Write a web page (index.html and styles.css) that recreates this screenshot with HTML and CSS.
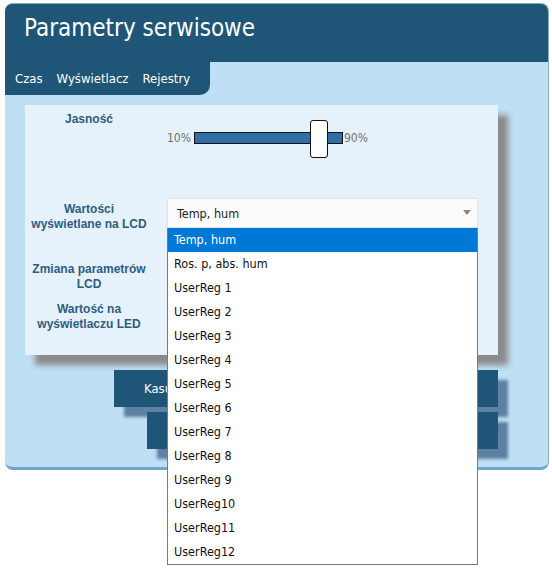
FILE: index.html
```html
<!DOCTYPE html>
<html lang="pl">
<head>
    <meta charset="UTF-8">
    <title>Parametry serwisowe</title>
    <link rel="stylesheet" href="styles.css">
</head>
<body>
    <div class="panel">
        <div class="header">
            <h1>Parametry serwisowe</h1>
        </div>

        <!-- Tabs -->
        <div class="tabbar">
            <div class="tabs">
                <span class="tab">Czas</span>
                <span class="tab">Wyświetlacz</span>
                <span class="tab">Rejestry</span>
            </div>
        </div>

        <div class="content">
            <div class="card">
                <div class="row row-brightness">
                    <div class="label">Jasność</div>
                    <div class="slider">
                        <span class="pct">10%</span>
                        <div class="track">
                            <div class="thumb"></div>
                        </div>
                        <span class="pct">90%</span>
                    </div>
                </div>

                <div class="row row-lcd">
                    <div class="label">Wartości<br>wyświetlane na LCD</div>
                    <div class="select-wrap">
                        <div class="select">
                            <span>Temp, hum</span>
                            <span class="arrow"></span>
                        </div>
                        <!-- Open dropdown list -->
                        <ul class="options">
                            <li class="selected">Temp, hum</li>
                            <li>Ros. p, abs. hum</li>
                            <li>UserReg 1</li>
                            <li>UserReg 2</li>
                            <li>UserReg 3</li>
                            <li>UserReg 4</li>
                            <li>UserReg 5</li>
                            <li>UserReg 6</li>
                            <li>UserReg 7</li>
                            <li>UserReg 8</li>
                            <li>UserReg 9</li>
                            <li>UserReg10</li>
                            <li>UserReg11</li>
                            <li>UserReg12</li>
                        </ul>
                    </div>
                </div>

                <div class="row row-small">
                    <div class="label">Zmiana parametrów<br>LCD</div>
                </div>

                <div class="row row-small">
                    <div class="label">Wartość na<br>wyświetlaczu LED</div>
                </div>
            </div>

            <div class="buttons">
                <button class="btn btn-wide">Kasuj ustawienia</button>
                <button class="btn btn-narrow">Zapisz</button>
            </div>
        </div>
    </div>
</body>
</html>
```

FILE: styles.css
```css
/* Base */
html, body {
    min-height: 569px;
}

body {
    margin: 0;
    background-color: #ffffff;
    font-family: 'DejaVu Sans Condensed', 'DejaVu Sans', sans-serif;
}

.panel {
    margin: 3px 0 0 5px;
    width: 544px;
    height: 467px;
    box-sizing: border-box;
    background-color: #bfdff4;
    border-top: 1px solid #8ea9c2;
    border-right: 1px solid #8ea9c2;
    border-bottom: 3px solid #6fa6cd;
    border-radius: 8px;
}

/* Header */
.header {
    background-color: #1f5577;
    height: 58px;
    padding-left: 19px;
    border-radius: 7px 7px 0 0;
    overflow: hidden;
}

.header h1 {
    margin: 10px 0 0 0;
    font-size: 24px;
    font-weight: normal;
    color: #ffffff;
}

/* Tabs */
.tabbar {
    height: 33px;
    display: flex;
}

.tabs {
    background-color: #1f5577;
    width: 205px;
    border-bottom-right-radius: 10px;
    display: flex;
    align-items: center;
    gap: 14px;
    padding-left: 10px;
    box-sizing: border-box;
}

.tab {
    color: #ffffff;
    font-size: 13px;
}

/* Content */
.content {
    padding: 10px 0 0 20px;
}

.card {
    width: 473px;
    height: 250px;
    background-color: #e5f2fc;
    box-shadow: 10px 10px 6px #8a8a8a;
}

.row {
    display: flex;
}

.label {
    width: 128px;
    margin-right: 14px;
    flex-shrink: 0;
    text-align: center;
    font-family: 'Liberation Sans', Arial, sans-serif;
    font-weight: bold;
    font-size: 12px;
    line-height: 15px;
    color: #2f5c82;
}

.row-brightness {
    height: 93px;
}

.row-brightness .label {
    padding-top: 7px;
}

.slider {
    display: flex;
    align-items: center;
    height: 64px;
    padding-top: 1px;
}

.pct {
    font-size: 12px;
    color: #707070;
}

.track {
    position: relative;
    width: 147px;
    height: 10px;
    margin: 0 1px 0 3px;
    background-color: #2f6fa6;
    border: 1px solid #111111;
}

.thumb {
    position: absolute;
    left: 115px;
    top: -13px;
    width: 16px;
    height: 36px;
    background-color: #ffffff;
    border: 1px solid #111111;
    border-radius: 3px;
}

/* Select */
.row-lcd {
    height: 66px;
}

.row-lcd .label {
    padding-top: 4px;
}

.row-small .label {
    margin-top: -2px;
}

.select-wrap {
    position: relative;
}

.select {
    width: 311px;
    height: 30px;
    box-sizing: border-box;
    background-color: #fcfcfc;
    border: 1px solid #dde3e8;
    display: flex;
    align-items: center;
    justify-content: space-between;
    padding: 0 6px 0 9px;
    font-size: 12.5px;
    color: #222222;
}

.arrow {
    width: 0;
    height: 0;
    border-left: 4px solid transparent;
    border-right: 4px solid transparent;
    border-top: 5px solid #888888;
    margin-bottom: 2px;
}

.options {
    position: absolute;
    top: 30px;
    left: 0;
    width: 311px;
    box-sizing: border-box;
    margin: 0;
    padding: 0;
    list-style: none;
    background-color: #ffffff;
    border: 1px solid #7a7a7a;
    border-top: none;
    z-index: 10;
}

.options li {
    height: 24px;
    line-height: 24px;
    padding-left: 6px;
    font-size: 12.5px;
    color: #111111;
}

.options li.selected {
    background-color: #0078d7;
    color: #ffffff;
}

.row-small {
    height: 40px;
}

/* Buttons */
.buttons {
    display: flex;
    flex-direction: column;
    align-items: flex-end;
    gap: 5px;
    margin-top: 15px;
    width: 473px;
}

.btn {
    height: 37px;
    border: none;
    background-color: #1f5577;
    color: #ffffff;
    font-family: 'DejaVu Sans Condensed', 'DejaVu Sans', sans-serif;
    font-size: 13px;
    box-shadow: 10px 10px 3px #5e80a3;
    text-align: left;
}

.btn-wide {
    width: 384px;
    padding-left: 30px;
}

.btn-narrow {
    width: 351px;
    padding-left: 140px;
}
```
